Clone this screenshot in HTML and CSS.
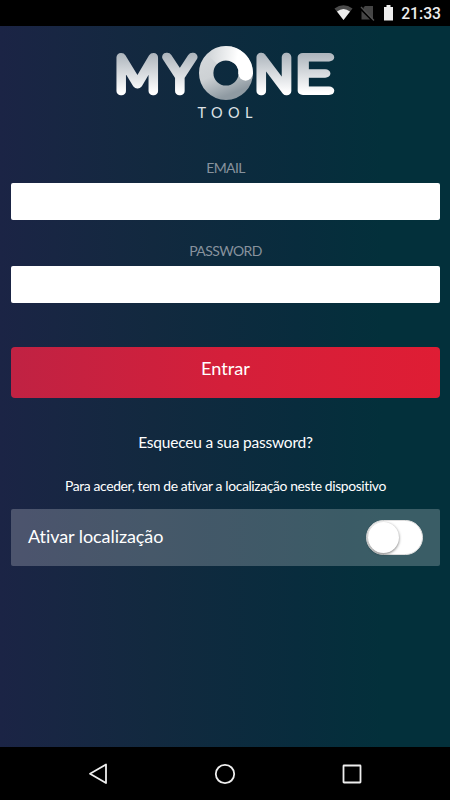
FILE: index.html
```html
<!DOCTYPE html>
<html lang="pt">
<head>
<meta charset="utf-8">
<meta name="viewport" content="width=device-width, initial-scale=1">
<title>MYONE Tool</title>
<link rel="stylesheet" href="styles.css">
</head>
<body>
<div class="statusbar">
  <svg class="status-icons" width="62" height="26" viewBox="0 0 62 26">
    <path d="M0.500 8.500Q9.500 2 18.500 8.500L9.500 20z" fill="#4b4b4b"/>
    <path d="M3 11.500Q9.500 6.500 16 11.500L9.500 20z" fill="#eee"/>
    <path d="M31 6h8v14l-9.500-9.500V7.500zM27.500 11L36 19.500h-8.500z" fill="#454545"/>
    <path d="M27 7l13 13.500" stroke="#505050" stroke-width="1.300"/>
    <path d="M50 7h2.500V5h4v2h2.500v13.500h-9z" fill="#eee"/>
  </svg>
  <span class="clock">21:33</span>
</div>
<main class="login">
  <svg class="logo" width="230" height="84" viewBox="110 40 230 84" role="img" aria-label="MYONE Tool">
    <defs>
      <linearGradient id="silver" gradientUnits="userSpaceOnUse" x1="0" y1="51" x2="0" y2="92">
        <stop offset="0" stop-color="#a9b1b9"/><stop offset="1" stop-color="#fff"/>
      </linearGradient>
      <linearGradient id="ring" x1="0.300" y1="0" x2="0.700" y2="1">
        <stop offset="0" stop-color="#d3d7da"/><stop offset="0.450" stop-color="#cdd1d4"/><stop offset="1" stop-color="#8f9aa2"/>
      </linearGradient>
      <linearGradient id="sweep" gradientUnits="userSpaceOnUse" x1="208" y1="55" x2="236" y2="60">
        <stop offset="0" stop-color="#fff" stop-opacity="0"/><stop offset="1" stop-color="#fff"/>
      </linearGradient>
    </defs>
    <g class="wordmark" fill="url(#silver)" stroke="url(#silver)">
      <text transform="translate(114.300 0.500) scale(1.030 1)" y="90.500">M</text>
      <text transform="translate(164.800 0.500) scale(1.030 1)" y="90.500">Y</text>
      <text transform="translate(254.300 0.500) scale(1.040 1)" y="90.500">N</text>
      <text class="wide" transform="translate(294.500 0.500) scale(1.330 1)" y="90.500">E</text>
    </g>
    <circle cx="225" cy="73" r="19.800" fill="none" stroke="url(#ring)" stroke-width="14.400"/>
    <path d="M211 59A19.800 19.800 0 0 1 244.700 74" fill="none" stroke="url(#sweep)" stroke-width="14.400"/>
    <circle cx="244.600" cy="73.500" r="7.200" fill="#fff"/>
    <text class="subtitle" x="196.500" y="118">TOOL</text>
  </svg>
  <form class="form">
    <label class="label" for="email">EMAIL</label>
    <input class="field" id="email" type="email">
    <label class="label" for="password">PASSWORD</label>
    <input class="field" id="password" type="password">
    <button class="submit" type="button">Entrar</button>
  </form>
  <a class="forgot">Esqueceu a sua password?</a>
  <p class="hint">Para aceder, tem de ativar a localização neste dispositivo</p>
  <div class="location">
    <span class="location-text">Ativar localização</span>
    <span class="toggle"><span class="knob"></span></span>
  </div>
</main>
<nav class="navbar">
  <svg width="22" height="24" viewBox="0 0 22 24"><path d="M19 2.500v18.500L3 11.750z"/></svg>
  <svg width="22" height="24" viewBox="0 0 22 24"><circle cx="11" cy="12" r="9.200"/></svg>
  <svg width="22" height="24" viewBox="0 0 22 24"><rect x="2.500" y="3.500" width="17" height="17" rx="0.500"/></svg>
</nav>
</body>
</html>
```
FILE: styles.css
```css
* { box-sizing: border-box; }
body {
  margin: 0;
  width: 450px;
  height: 800px;
  display: flex;
  flex-direction: column;
  font-family: Lato, sans-serif;
  font-variant-ligatures: none;
  color: #fff;
  background: #000;
  overflow: hidden;
}
.statusbar {
  height: 26px;
  flex: none;
  display: flex;
  justify-content: flex-end;
  align-items: center;
  gap: 5px;
  padding-right: 9px;
}
.clock {
  font: 500 15.700px/26px Roboto, sans-serif;
  color: #eee;
  padding-top: 2px;
}
.login {
  flex: 1;
  display: flex;
  flex-direction: column;
  align-items: center;
  padding: 14px 10px 0 11px;
  background: linear-gradient(90deg, #1b2445 0%, #182643 12%, #12293f 34%, #082c3d 66%, #03303b 85%, #03303b 100%);
}
.logo { flex: none; }
.wordmark {
  font-family: Lato, sans-serif;
  font-weight: 100;
  font-size: 48px;
  stroke-width: 8.700px;
  stroke-linejoin: round;
  stroke-linecap: round;
}
.wordmark .wide { stroke-width: 7.800px; }
.subtitle {
  font-size: 14.500px;
  letter-spacing: 5.400px;
  fill: #dfe3e6;
}
.form {
  width: 100%;
  display: flex;
  flex-direction: column;
  text-align: center;
}
.label {
  font-size: 14px;
  line-height: 20px;
  letter-spacing: -0.600px;
  margin: 34px 0 5px;
  color: #87929d;
}
.field {
  height: 37px;
  border: 0;
  border-radius: 2px;
  background: #fff;
}
.field + .label { margin: 21px 0 5px; }
.submit {
  height: 51px;
  margin-top: 44px;
  padding: 0 0 9px;
  border: 0;
  border-radius: 4px;
  font: 18.200px Lato, sans-serif;
  color: #fff;
  background: linear-gradient(90deg, #c02243, #d41f3a 50%, #df1d34);
}
.forgot {
  margin-top: 34px;
  font-size: 15.500px;
  line-height: 20px;
  letter-spacing: -0.200px;
}
.hint {
  margin: 24px 0 13px;
  font-size: 13.900px;
  line-height: 20px;
  letter-spacing: -0.380px;
}
.location {
  width: 100%;
  height: 57px;
  display: flex;
  align-items: center;
  justify-content: space-between;
  padding: 0 17px;
  border-radius: 2px;
  font-size: 18px;
  background: rgba(255, 255, 255, 0.22);
}
.location-text {
  padding-bottom: 3px;
  letter-spacing: -0.070px;
}
.toggle {
  width: 57px;
  height: 35px;
  padding: 1px;
  border: 1px solid #ddd;
  border-radius: 18px;
  background: #fff;
}
.knob {
  display: block;
  width: 31px;
  height: 31px;
  border-radius: 50%;
  background: #fff;
  box-shadow: 0 1px 3px rgba(0, 0, 0, 0.55);
}
.navbar {
  height: 53px;
  flex: none;
  display: flex;
  justify-content: space-between;
  align-items: center;
  padding: 0 87px;
}
.navbar svg {
  fill: none;
  stroke: #eee;
  stroke-width: 1.800px;
  stroke-linejoin: round;
}
```
